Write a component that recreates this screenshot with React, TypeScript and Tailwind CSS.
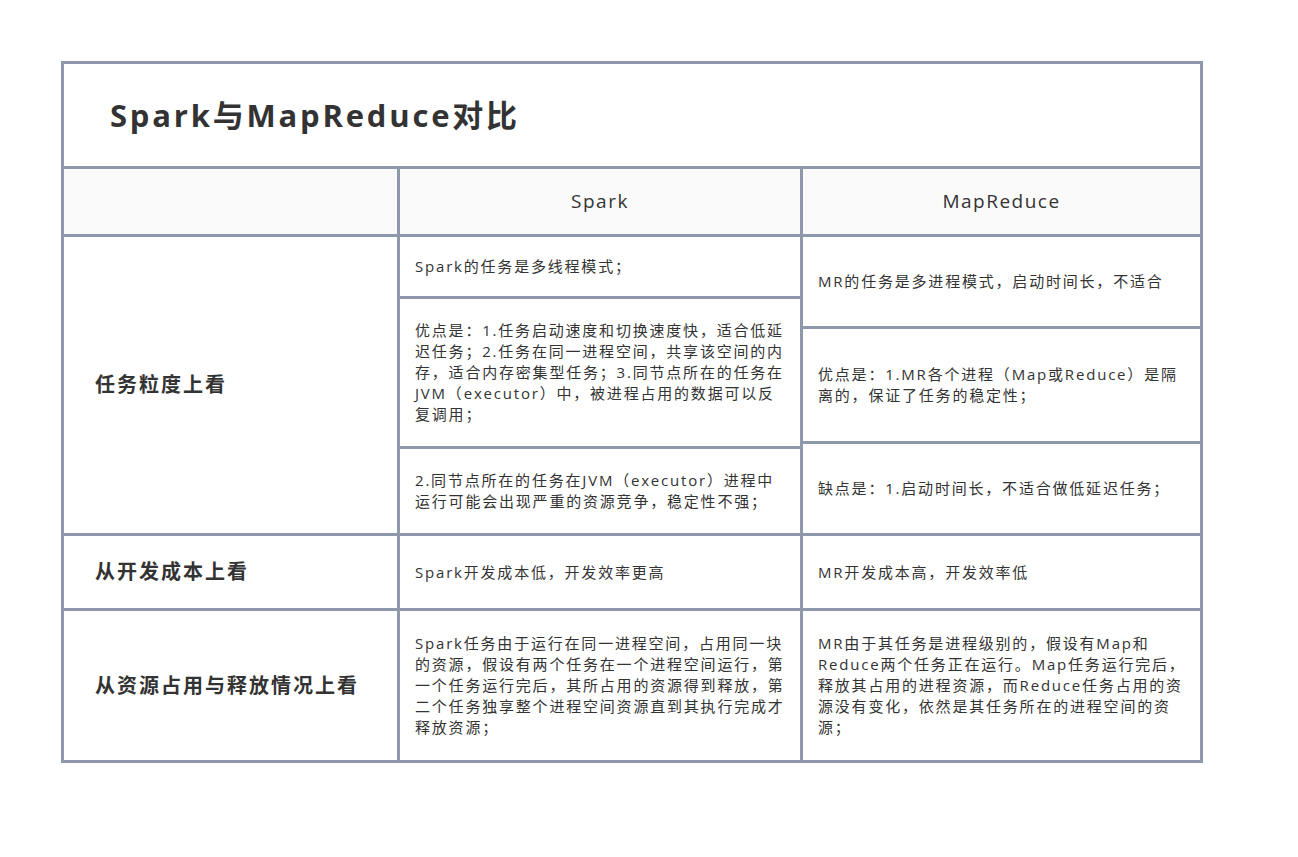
const B = "border-[#8d98ab]";
const font = { fontFamily: '"Open Sans","Noto Sans CJK SC",sans-serif' };

function Cell({ h, children, last }: { h: number; children: React.ReactNode; last?: boolean }) {
  return (
    <div
      className={`flex items-center pl-[15px] pr-[12px] text-[15px] tracking-[1.8px] leading-[21px] text-[#333] ${last ? "" : `border-b-[3px] ${B}`}`}
      style={{ height: h }}
    >
      <div>{children}</div>
    </div>
  );
}

const label = `w-[336px] border-r-[3px] ${B} flex items-center pl-[31px] text-[20px] tracking-[2px] font-bold text-[#333]`;

export default function App() {
  return (
    <div className="w-[1298px] h-[857px] bg-white pt-[61px] pl-[61px]" style={font}>
      <div className={`w-[1142px] border-[3px] ${B}`}>
        <div className={`h-[105px] border-b-[3px] ${B} flex items-center pl-[46px] text-[31px] tracking-[2.8px] font-bold text-[#333]`}>
          Spark与MapReduce对比
        </div>
        <div className={`h-[68px] border-b-[3px] ${B} flex bg-[#fafafa] text-[19px] tracking-[1.5px] text-[#333]`}>
          <div className={`w-[336px] border-r-[3px] ${B}`} />
          <div className={`w-[403px] border-r-[3px] ${B} flex items-center justify-center`}>Spark</div>
          <div className="flex-1 flex items-center justify-center">MapReduce</div>
        </div>
        <div className={`h-[299px] border-b-[3px] ${B} flex`}>
          <div className={label}>任务粒度上看</div>
          <div className={`w-[403px] border-r-[3px] ${B} flex flex-col`}>
            <Cell h={62}>Spark的任务是多线程模式；</Cell>
            <Cell h={150}>优点是：1.任务启动速度和切换速度快，适合低延迟任务；2.任务在同一进程空间，共享该空间的内存，适合内存密集型任务；3.同节点所在的任务在JVM（executor）中，被进程占用的数据可以反复调用；</Cell>
            <Cell h={84} last>2.同节点所在的任务在JVM（executor）进程中运行可能会出现严重的资源竞争，稳定性不强；</Cell>
          </div>
          <div className="flex-1 flex flex-col">
            <Cell h={92}>MR的任务是多进程模式，启动时间长，不适合</Cell>
            <Cell h={115}>优点是：1.MR各个进程（Map或Reduce）是隔离的，保证了任务的稳定性；</Cell>
            <Cell h={89} last>缺点是：1.启动时间长，不适合做低延迟任务；</Cell>
          </div>
        </div>
        <div className={`h-[75px] border-b-[3px] ${B} flex`}>
          <div className={label}>从开发成本上看</div>
          <div className={`w-[403px] border-r-[3px] ${B} flex flex-col`}>
            <Cell h={72} last>Spark开发成本低，开发效率更高</Cell>
          </div>
          <div className="flex-1 flex flex-col">
            <Cell h={72} last>MR开发成本高，开发效率低</Cell>
          </div>
        </div>
        <div className="h-[149px] flex">
          <div className={label}>从资源占用与释放情况上看</div>
          <div className={`w-[403px] border-r-[3px] ${B} flex flex-col`}>
            <Cell h={149} last>Spark任务由于运行在同一进程空间，占用同一块的资源，假设有两个任务在一个进程空间运行，第一个任务运行完后，其所占用的资源得到释放，第二个任务独享整个进程空间资源直到其执行完成才释放资源；</Cell>
          </div>
          <div className="flex-1 flex flex-col">
            <Cell h={149} last>MR由于其任务是进程级别的，假设有Map和Reduce两个任务正在运行。Map任务运行完后，释放其占用的进程资源，而Reduce任务占用的资源没有变化，依然是其任务所在的进程空间的资源；</Cell>
          </div>
        </div>
      </div>
    </div>
  );
}
